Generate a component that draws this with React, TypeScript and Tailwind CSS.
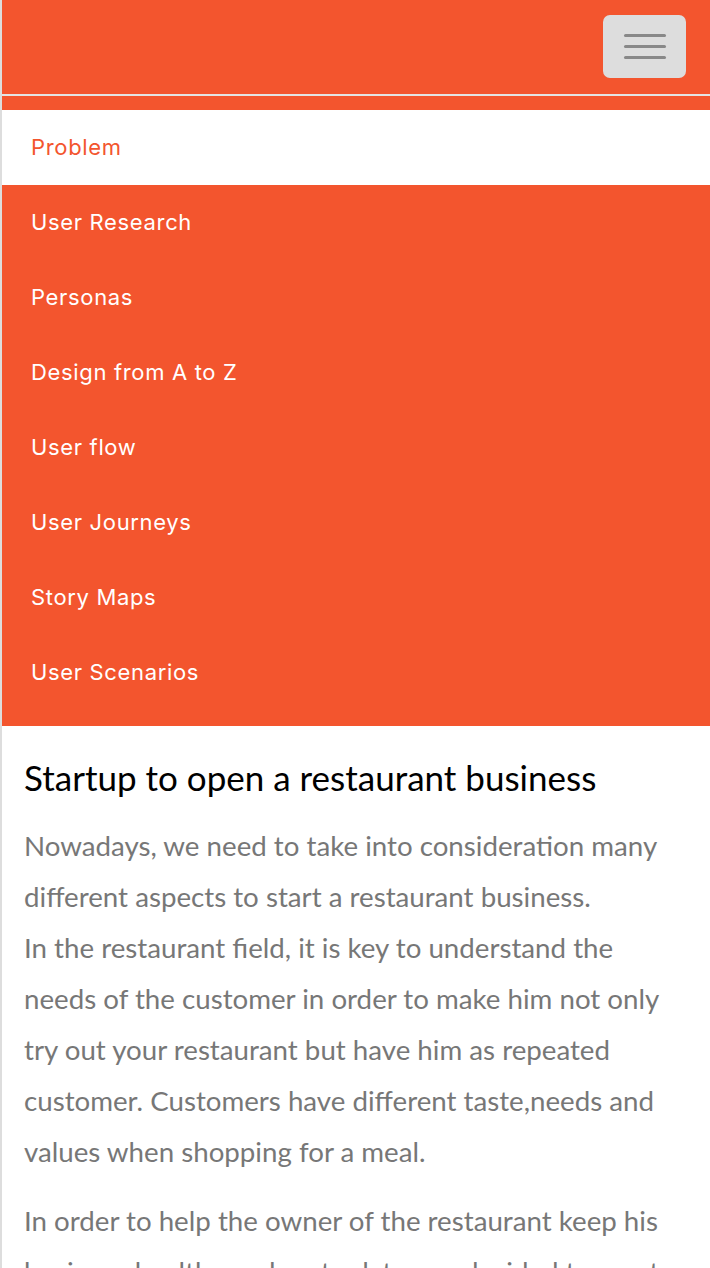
import React from 'react';

const navItems = [
  'Problem',
  'User Research',
  'Personas',
  'Design from A to Z',
  'User flow',
  'User Journeys',
  'Story Maps',
  'User Scenarios',
];

const App: React.FC = () => {
  return (
    <div className="min-h-screen bg-white border-l-2 border-[#dddddd]">
      {/* Top bar */}
      <header className="h-[94px] bg-[#f3552e] flex items-start justify-end pt-[15px] pr-[24px]">
        <button className="w-[83px] h-[63px] rounded-[7px] bg-[#dddddd] flex flex-col items-center justify-center gap-[8px]">
          <span className="block w-[42px] h-[3px] rounded-full bg-[#888888]" />
          <span className="block w-[42px] h-[3px] rounded-full bg-[#888888]" />
          <span className="block w-[42px] h-[3px] rounded-full bg-[#888888]" />
        </button>
      </header>
      <div className="h-[2px] bg-[#e4e4e4]" />

      {/* Menu */}
      <nav className="bg-[#f3552e] pt-[14px] pb-[16px] font-['Inter',sans-serif]">
        {navItems.map((item, i) => (
          <a
            key={item}
            href="#"
            className={`flex items-center h-[75px] px-[29px] text-[22px] tracking-[0.03em] ${
              i === 0 ? 'bg-white text-[#f3552e]' : 'text-white'
            }`}
          >
            {item}
          </a>
        ))}
      </nav>

      {/* Content */}
      <main className="px-[22px] pt-[29px] font-['Lato',sans-serif]">
        <h1 className="text-[35px] leading-[44px] text-black mb-[21px]">
          Startup to open a restaurant business
        </h1>
        <p className="text-[27.7px] leading-[51px] text-[#777777] mb-[18px]">
          Nowadays, we need to take into consideration many different aspects to start a restaurant business.
          <br />
          In the restaurant field, it is key to understand the needs of the customer in order to make him not only
          try out your restaurant but have him as repeated customer. Customers have different taste,needs and values
          when shopping for a meal.
        </p>
        <p className="text-[27.7px] leading-[51px] text-[#777777]">
          In order to help the owner of the restaurant keep his business healthy and up to date, we decided to create
          a tool that helps them understand their customers better.
        </p>
      </main>
    </div>
  );
};

export default App;
